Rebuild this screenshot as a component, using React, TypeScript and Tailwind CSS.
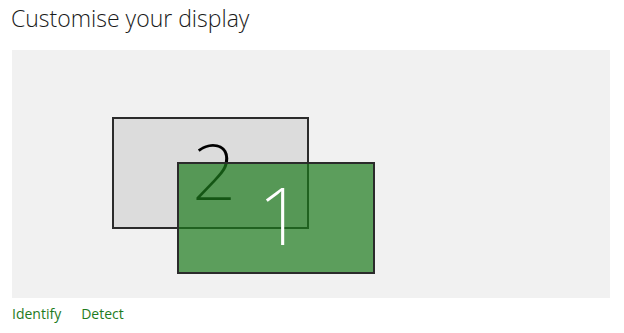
import React from 'react';

const Monitor: React.FC<{ n: string; className: string; numClass: string }> = ({ n, className, numClass }) => (
  <div className={`absolute border-2 border-[#2b2b2b] ${className}`}>
    <span className={`absolute font-[200] leading-none ${numClass}`}>{n}</span>
  </div>
);

export default function App() {
  return (
    <div className="w-[624px] h-[333px] bg-white font-['Open_Sans',sans-serif] overflow-hidden">
      <h1 className="pl-[11px] pt-[2px] h-[50px] text-[23px] font-light text-[#1a1a1a] leading-[32px]">
        Customise your display
      </h1>
      <div className="relative ml-[12px] w-[598px] h-[248px] bg-[#f1f1f1]">
        <Monitor
          n="2"
          className="left-[100px] top-[67px] w-[197px] h-[112px] bg-[#dcdcdc]"
          numClass="left-[78px] top-[12px] text-[78px] text-black font-['Noto_Sans',sans-serif]"
        />
        <Monitor
          n="1"
          className="left-[165px] top-[112px] w-[198px] h-[112px] bg-[#1c7a1c]/70"
          numClass="left-[79px] top-[10px] text-[80px] text-white font-['Noto_Sans',sans-serif]"
        />
      </div>
      <div className="flex gap-[20px] pl-[12px] pt-[5px] text-[14px] text-[#1e7b1e]">
        <span>Identify</span>
        <span>Detect</span>
      </div>
    </div>
  );
}
